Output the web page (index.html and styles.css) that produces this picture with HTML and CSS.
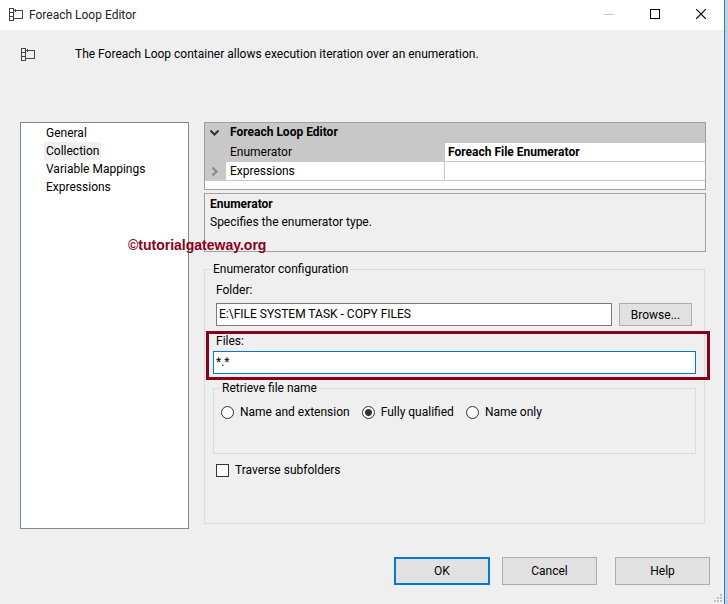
FILE: index.html
```html
<!DOCTYPE html>
<html lang="en">
<head>
<meta charset="utf-8">
<title>Foreach Loop Editor</title>
<link rel="stylesheet" href="styles.css">
</head>
<body>
<div class="window">
  <header class="titlebar">
    <svg class="loop-icon" width="14" height="13" viewBox="0 0 14 13" fill="none" stroke="#444" shape-rendering="crispEdges" aria-hidden="true">
      <path d="M.5 .5H4.500V12.500H.5ZM.5 4.500H4.500M.5 8.500H4.500M4.500 2.500H13.500V10.500H4.500M6.500 1V4"/>
    </svg>
    <h1 class="title">Foreach Loop Editor</h1>
    <button class="caption-btn" type="button" aria-label="Minimize" disabled>
      <svg width="10" height="10" viewBox="0 0 10 10" fill="none" stroke="#c8c8c8" shape-rendering="crispEdges"><path d="M0 5.500H10"/></svg>
    </button>
    <button class="caption-btn" type="button" aria-label="Maximize">
      <svg width="10" height="10" viewBox="0 0 10 10" fill="none" stroke="#000" shape-rendering="crispEdges"><path d="M.5 .5H9.500V9.500H.5Z"/></svg>
    </button>
    <button class="caption-btn" type="button" aria-label="Close">
      <svg width="10" height="10" viewBox="0 0 10 10" fill="none" stroke="#000" stroke-width="1.200"><path d="M0 0L10 10M10 0L0 10"/></svg>
    </button>
  </header>

  <div class="intro">
    <svg class="loop-icon" width="14" height="13" viewBox="0 0 14 13" fill="none" stroke="#444" shape-rendering="crispEdges" aria-hidden="true">
      <path d="M.5 .5H4.500V12.500H.5ZM.5 4.500H4.500M.5 8.500H4.500M4.500 2.500H13.500V10.500H4.500M6.500 1V4"/>
    </svg>
    <p>The Foreach Loop container allows execution iteration over an enumeration.</p>
  </div>

  <main class="content">
    <nav class="pages">
      <a href="#general">General</a>
      <a href="#collection" class="current" aria-current="page">Collection</a>
      <a href="#mappings">Variable Mappings</a>
      <a href="#expressions">Expressions</a>
    </nav>

    <form class="page" id="collection">
      <div class="grid">
        <table>
          <colgroup><col class="col-toggle"><col class="col-name"><col></colgroup>
          <tbody>
            <tr class="category">
              <td class="toggle"><svg width="9" height="6" viewBox="0 0 9 6" fill="none" stroke="#333" stroke-width="2"><path d="M.5 .5L4.500 4.500L8.500 .5"/></svg></td>
              <th colspan="2">Foreach Loop Editor</th>
            </tr>
            <tr class="selected">
              <td class="toggle"></td><td>Enumerator</td><td class="value">Foreach File Enumerator</td>
            </tr>
            <tr>
              <td class="toggle"><svg class="closed" width="6" height="9" viewBox="0 0 6 9" fill="none" stroke="#888" stroke-width="2"><path d="M.5 .5L4.500 4.500L.5 8.500"/></svg></td>
              <td>Expressions</td><td class="value"></td>
            </tr>
          </tbody>
        </table>
      </div>

      <div class="description">
        <strong>Enumerator</strong>
        <p>Specifies the enumerator type.</p>
        <span class="watermark">©tutorialgateway.org</span>
      </div>

      <fieldset class="config">
        <legend>Enumerator configuration</legend>
        <div class="folder">
          <label for="folder">Folder:</label>
          <div class="folder-row">
            <input class="text" type="text" id="folder" value="E:\FILE SYSTEM TASK - COPY FILES">
            <button class="button" type="button">Browse...</button>
          </div>
        </div>
        <div class="files">
          <label for="files">Files:</label>
          <input class="text active" type="text" id="files" value="*.*">
        </div>
        <fieldset class="retrieve">
          <legend>Retrieve file name</legend>
          <label class="option"><input type="radio" name="retrieve">Name and extension</label>
          <label class="option"><input type="radio" name="retrieve" checked>Fully qualified</label>
          <label class="option"><input type="radio" name="retrieve">Name only</label>
        </fieldset>
        <label class="option subfolders"><input type="checkbox">Traverse subfolders</label>
      </fieldset>
    </form>
  </main>

  <footer class="actions">
    <button class="button default" type="button">OK</button>
    <button class="button" type="button">Cancel</button>
    <button class="button help" type="button">Help</button>
  </footer>
  <svg class="grip" width="8" height="8" viewBox="0 0 8 8" fill="#bfbfbf" shape-rendering="crispEdges" aria-hidden="true">
    <path d="M6 0h2v2h-2zM3 3h2v2h-2zM6 3h2v2h-2zM0 6h2v2h-2zM3 6h2v2h-2zM6 6h2v2h-2z"/>
  </svg>
</div>
</body>
</html>
```
FILE: styles.css
```css
* { box-sizing: border-box; }

body {
  margin: 0;
  background: #cfcfcf;
  color: #000;
  font: 12px/16px Roboto, "Open Sans", sans-serif;
}

p, h1 { margin: 0; }
button, input { font: inherit; color: inherit; }
svg { display: block; flex: none; }

.window {
  position: relative;
  display: flex;
  flex-direction: column;
  min-height: 100vh;
  margin-right: 3px;
  border-right: 1px solid #1883d7;
  background: #efefef;
}

.titlebar {
  display: flex;
  align-items: center;
  height: 30px;
  padding-left: 9px;
  background: #fff;
}
.title {
  flex: 1;
  margin-left: 6px;
  font-size: 12px;
  font-weight: 400;
  color: #222;
}
.titlebar .loop-icon { margin-bottom: 2px; }
.caption-btn {
  display: flex;
  align-items: center;
  justify-content: center;
  width: 46px;
  height: 28px;
  padding: 0;
  border: 0;
  background: none;
}
.titlebar .caption-btn { margin-bottom: 2px; }

.intro {
  display: flex;
  align-items: center;
  gap: 40px;
  height: 92px;
  padding: 0 21px 44px;
}

.content {
  flex: 1;
  display: flex;
  gap: 15px;
  padding: 0 18px 0 20px;
}

.pages {
  width: 169px;
  padding-top: 1px;
  border: 1px solid #828790;
  background: #fff;
}
.pages a {
  display: block;
  width: max-content;
  margin-left: 23px;
  padding: 0 2px;
  line-height: 18px;
  color: inherit;
  text-decoration: none;
}
.pages .current { background: #efefef; }

.page {
  flex: 1;
  display: flex;
  flex-direction: column;
}

.grid {
  padding-bottom: 8px;
  border: 1px solid #a0a0a0;
  background: #fff;
}
.grid table {
  width: 100%;
  table-layout: fixed;
  border-collapse: separate;
  border-spacing: 0;
}
.col-toggle { width: 21px; }
.col-name { width: 218px; }
.grid td, .grid th {
  height: 19px;
  padding: 0 4px;
  border-bottom: 1px solid #c7c8c7;
  line-height: 18px;
  text-align: left;
}
.grid .category > * { height: 20px; line-height: 19px; background: #c7c8c7; }
.grid .toggle, .grid .selected td { background: #c7c8c7; }
.grid .toggle { padding: 0 0 0 5px; }
.grid .closed { margin-left: 2px; }
.grid .value, .grid .selected .value {
  padding-left: 3px;
  border-left: 1px solid #c7c8c7;
  background: #fff;
  font-weight: 700;
}

.description {
  position: relative;
  height: 59px;
  margin-top: 3px;
  padding: 1px 5px;
  border: 1px solid #a0a0a0;
  line-height: 18px;
}
.description strong { display: block; }
.watermark {
  position: absolute;
  left: -77px;
  bottom: -2px;
  color: #8b0018;
  font: 700 14px/16px "Liberation Sans", Arial, sans-serif;
}

fieldset {
  min-width: 0;
  margin: 0;
  padding: 0;
  border: 1px solid #dcdcdc;
}
legend { padding: 0 2px; }

.config {
  flex: 1;
  margin: 9px 1px 5px 0;
  padding: 0 8px 0 8px;
}
.config > legend { margin-left: -2px; }

.folder { padding: 5px 4px 0 3px; }
.folder label, .files label { display: block; }
.folder-row {
  display: flex;
  gap: 7px;
  margin-top: 5px;
}
.text {
  height: 23px;
  padding: 0 2px 2px;
  border: 1px solid #7a7a7a;
  border-radius: 0;
  outline: 0;
  background: #fff;
}
.folder-row .text { flex: 1; min-width: 0; }
.folder-row .button { width: 73px; }

.files {
  position: relative;
  margin-top: 7px;
}
.files label { padding-left: 3px; }
.files .text {
  display: block;
  width: 100%;
  margin-top: 2px;
}
.text.active { border-color: #0078d7; }
.files::after {
  content: "";
  position: absolute;
  inset: -2px -14px -6px -7px;
  border: 3px solid #850018;
  pointer-events: none;
}

.retrieve {
  display: flex;
  gap: 12px;
  margin-top: 6px;
  padding: 8px 8px 33px 7px;
}
.retrieve legend { margin-left: -1px; }

.option {
  display: flex;
  align-items: center;
  gap: 6px;
}
.option input {
  appearance: none;
  flex: none;
  width: 13px;
  height: 13px;
  margin: 0;
  border: 1px solid #333;
  background: #fff;
}
.option input[type="radio"] { border-radius: 50%; }
.option input[type="radio"]:checked {
  background: radial-gradient(circle, #333 3px, #fff 4px);
}
.subfolders { margin: 8px 0 0 3px; }

.button {
  height: 23px;
  padding: 0;
  border: 1px solid #adadad;
  border-radius: 0;
  background: #e1e1e1;
}

.actions {
  display: flex;
  justify-content: flex-end;
  padding: 28px 14px 19px;
}
.actions .button {
  width: 95px;
  height: 28px;
  margin-left: 12px;
}
.actions .default { width: 96px; border: 2px solid #0078d7; }
.actions .help { margin-left: 18px; }

.grip {
  position: absolute;
  right: 2px;
  bottom: 2px;
}
```
